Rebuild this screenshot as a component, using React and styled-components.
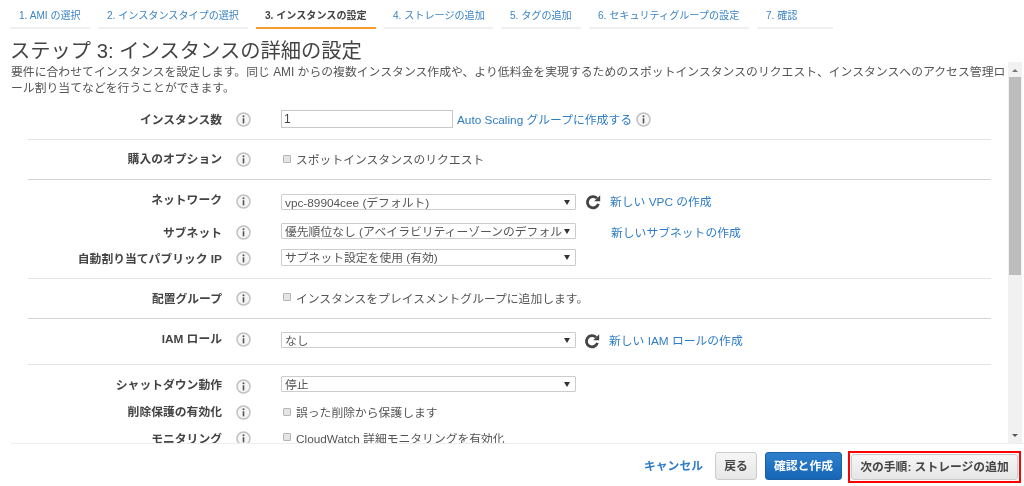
import React from "react";
import styled, { createGlobalStyle } from "styled-components";

const Global = createGlobalStyle`
  html, body { margin: 0; padding: 0; background: #fff; }
  body { font-family: "Liberation Sans", "Noto Sans CJK JP", sans-serif; color: #444; overflow: hidden; }
  * { box-sizing: border-box; }
`;

const Page = styled.div`
  width: 1024px;
  height: 486px;
  display: flex;
  flex-direction: column;
  overflow: hidden;
  filter: blur(0.45px);
`;
const Tabs = styled.nav`
  display: flex;
  gap: 8px;
  padding-left: 10px;
  height: 29px;
  flex: none;
`;
const Tab = styled.div`
  width: ${(p) => p.$w}px;
  height: 29px;
  padding: 8px 0 0 9px;
  font-size: 10.1px;
  line-height: 16px;
  white-space: nowrap;
  color: ${(p) => (p.$active ? "#444" : "#3b84c4")};
  font-weight: ${(p) => (p.$active ? 700 : 400)};
  border-bottom: 2px solid ${(p) => (p.$active ? "#f79a2e" : "#f0f0f0")};
`;
const Title = styled.h1`
  margin: 11px 0 0 10px;
  font-size: 20.3px;
  line-height: 22px;
  height: 22px;
  font-weight: 400;
  color: #444;
  white-space: nowrap;
  flex: none;
`;
const Middle = styled.div`
  height: 381px;
  flex: none;
  display: flex;
`;
const Scroller = styled.div`
  flex: 1;
  min-width: 0;
  overflow: hidden;
  padding-left: 11px;
`;
const Lead = styled.p`
  margin: 2px 0 0;
  width: 996px;
  font-size: 11.85px;
  line-height: 16px;
  color: #555;
  word-break: break-all;
`;
const Form = styled.div`
  margin: 0 17px;
`;
const Section = styled.section`
  padding: ${(p) => p.$top}px 0 ${(p) => p.$bottom}px;
  border-bottom: ${(p) => (p.$last ? "none" : `1px solid ${p.$strong ? "#d4d4d4" : "#e4e4e4"}`)};
`;
const Row = styled.div`
  display: grid;
  grid-template-columns: 194px 42px 1fr;
  align-items: center;
  height: 20px;
  margin-bottom: ${(p) => p.$gap || 0}px;
`;
const Label = styled.label`
  text-align: right;
  font-size: 11.8px;
  font-weight: 700;
  color: #444;
  white-space: nowrap;
  padding-bottom: ${(p) => p.$up || 0}px;
`;
const InfoCell = styled.div`
  display: flex;
  justify-content: center;
  width: 42px;
`;
const Info = styled.svg`
  width: 15px;
  height: 15px;
  flex: none;
  margin-left: ${(p) => p.$ml || 0}px;
`;
const Control = styled.div`
  display: flex;
  align-items: center;
  min-width: 0;
  padding-left: 17px;
`;
const TextInput = styled.input`
  width: 172px;
  height: 18px;
  padding: 0 2px;
  border: 1px solid #c8c8c8;
  font: 12px "Liberation Sans", sans-serif;
  color: #444;
  outline: none;
`;
const Link = styled.a`
  color: #2f7dc6;
  font-size: 11.8px;
  white-space: nowrap;
  margin-left: ${(p) => p.$ml}px;
  padding-bottom: ${(p) => p.$up || 0}px;
`;
const SelectBox = styled.div`
  position: relative;
  width: 295px;
  height: ${(p) => p.$h || 16}px;
  margin-top: ${(p) => (p.$nudge > 0 ? p.$nudge * 2 : 0)}px;
  margin-bottom: ${(p) => (p.$nudge < 0 ? -p.$nudge * 2 : 0)}px;
  border: 1px solid #ccc;
  border-radius: 1px;
  overflow: hidden;
  padding: 0 13px 0 3px;
  font-size: 11.8px;
  line-height: 16px;
  color: #555;
  flex: none;
  background: #fff;
`;
const SelectText = styled.span`
  display: block;
  overflow: hidden;
  white-space: nowrap;
`;
const Arrow = styled.span`
  position: absolute;
  right: 5px;
  top: 5px;
  width: 0;
  height: 0;
  border-left: 3px solid transparent;
  border-right: 3px solid transparent;
  border-top: 5px solid #333;
`;
const Reload = styled.svg`
  width: 16px;
  height: 16px;
  margin: ${(p) => p.$dy}px 0 0 ${(p) => p.$ml}px;
  flex: none;
`;
const CheckLine = styled.div`
  display: flex;
  align-items: center;
  gap: 5px;
  font-size: 11.8px;
  color: #555;
  white-space: nowrap;
  padding: 0 0 2px 2px;
`;
const Box = styled.span`
  width: 8px;
  height: 8px;
  flex: none;
  border: 1px solid #b5b5b5;
  border-radius: 1px;
  background: #e4e4e4;
`;
const Scrollbar = styled.div`
  width: 14px;
  margin-right: 2px;
  flex: none;
  background: #f1f1f1;
  display: flex;
  flex-direction: column;
  align-items: center;
`;
const ScrollArrow = styled.span`
  flex: none;
  width: 0;
  height: 0;
  border-left: 3px solid transparent;
  border-right: 3px solid transparent;
  ${(p) => (p.$up ? "border-bottom: 3px solid #777; margin: 7px 0 5px;" : "border-top: 3px solid #555; margin: auto 0 6px;")}
`;
const Thumb = styled.div`
  width: 12px;
  height: 198px;
  background: #bdbdbd;
`;
const Footer = styled.footer`
  flex: 1;
  margin-left: 11px;
  border-top: 1px solid #eee;
  display: flex;
  align-items: flex-start;
  justify-content: flex-end;
  padding: 8px 3px 0 0;
`;
const Cancel = styled.a`
  color: #2f7dc6;
  font-size: 11.8px;
  font-weight: 700;
  margin: 4px 12px 0 0;
  white-space: nowrap;
`;
const Button = styled.button`
  height: ${(p) => p.$h || 28}px;
  width: ${(p) => p.$w}px;
  padding: 0 0 3px;
  border-radius: 3px;
  font: 700 11.8px "Liberation Sans", "Noto Sans CJK JP", sans-serif;
  white-space: nowrap;
  margin-right: ${(p) => p.$mr || 0}px;
  color: ${(p) => (p.$primary ? "#fff" : "#444")};
  border: 1px solid ${(p) => (p.$primary ? "#1a62a8" : "#ccc")};
  background: ${(p) => (p.$primary ? "linear-gradient(#2d7fcb, #1666b5)" : "linear-gradient(#f6f6f6, #e6e6e6)")};
`;
const Highlight = styled.div`
  border: 2px solid #f00;
  padding: 1px;
  height: 32px;
  margin-top: -1px;
  flex: none;
`;

const tabs = [
  ["1. AMI の選択", 80],
  ["2. インスタンスタイプの選択", 150],
  ["3. インスタンスの設定", 120, true],
  ["4. ストレージの追加", 109],
  ["5. タグの追加", 80],
  ["6. セキュリティグループの設定", 160],
  ["7. 確認", 76],
];

const InfoIcon = ({ ml }) => (
  <Info viewBox="0 0 15 15" $ml={ml}>
    <circle cx="7.5" cy="7.5" r="6.5" fill="#f6f6f6" stroke="#c2c2c2" strokeWidth="1.5" />
    <circle cx="7.5" cy="4.3" r="1" fill="#555" />
    <rect x="6.7" y="6.2" width="1.6" height="5.2" fill="#555" />
  </Info>
);

const ReloadIcon = ({ ml, dy }) => (
  <Reload viewBox="0 0 16 16" $ml={ml} $dy={dy}>
    <path d="M12 4.3A5.6 5.6 0 1 0 13.4 9.8" fill="none" stroke="#444" strokeWidth="2.8" />
    <polygon points="15.2,1.2 15.2,7.2 9.2,7.2" fill="#444" />
  </Reload>
);

const Field = ({ label, up, gap, children }) => (
  <Row $gap={gap}>
    <Label $up={up}>{label}</Label>
    <InfoCell><InfoIcon /></InfoCell>
    <Control>{children}</Control>
  </Row>
);

const Select = ({ children, h, nudge }) => (
  <SelectBox $h={h} $nudge={nudge}>
    <SelectText>{children}</SelectText>
    <Arrow />
  </SelectBox>
);

const Check = ({ children }) => (
  <CheckLine><Box />{children}</CheckLine>
);

export default function App() {
  return (
    <Page>
      <Global />
      <Tabs>
        {tabs.map(([t, w, a]) => (
          <Tab key={t} $w={w} $active={a}>{t}</Tab>
        ))}
      </Tabs>
      <Title>ステップ 3: インスタンスの詳細の設定</Title>
      <Middle>
        <Scroller>
          <Lead>
            要件に合わせてインスタンスを設定します。同じ AMI からの複数インスタンス作成や、より低料金を実現するためのスポットインスタンスのリクエスト、インスタンスへのアクセス管理ロール割り当てなどを行うことができます。
          </Lead>
          <Form>
            <Section $top={13} $bottom={10}>
              <Field label="インスタンス数" up={2}>
                <TextInput defaultValue="1" readOnly />
                <Link $ml={4} $up={2}>Auto Scaling グループに作成する</Link>
                <InfoIcon ml={4} />
              </Field>
            </Section>
            <Section $top={9} $bottom={10} $strong>
              <Field label="購入のオプション" up={4}>
                <Check>スポットインスタンスのリクエスト</Check>
              </Field>
            </Section>
            <Section $top={10} $bottom={10}>
              <Field label="ネットワーク" up={6} gap={12}>
                <Select nudge={0}>vpc-89904cee (デフォルト)</Select>
                <ReloadIcon ml={9} dy={0} />
                <Link $ml={9} $up={2}>新しい VPC の作成</Link>
              </Field>
              <Field label="サブネット" up={2} gap={6}>
                <Select nudge={-1}>優先順位なし (アベイラビリティーゾーンのデフォルト)</Select>
                <Link $ml={35} $up={2}>新しいサブネットの作成</Link>
              </Field>
              <Field label="自動割り当てパブリック IP" up={2}>
                <Select h={17} nudge={-1}>サブネット設定を使用 (有効)</Select>
              </Field>
            </Section>
            <Section $top={9} $bottom={10} $strong>
              <Field label="配置グループ" up={2}>
                <Check>インスタンスをプレイスメントグループに追加します。</Check>
              </Field>
            </Section>
            <Section $top={10} $bottom={5}>
              <Field label="IAM ロール" up={4} gap={10}>
                <Select nudge={0}>なし</Select>
                <ReloadIcon ml={8} dy={2} />
                <Link $ml={9}>新しい IAM ロールの作成</Link>
              </Field>
            </Section>
            <Section $top={10} $bottom={0} $last>
              <Field label="シャットダウン動作" up={6} gap={7}>
                <Select nudge={-3}>停止</Select>
              </Field>
              <Field label="削除保護の有効化" up={4} gap={6}>
                <Check>誤った削除から保護します</Check>
              </Field>
              <Field label="モニタリング" up={2}>
                <Check>CloudWatch 詳細モニタリングを有効化</Check>
              </Field>
            </Section>
          </Form>
        </Scroller>
        <Scrollbar>
          <ScrollArrow $up />
          <Thumb />
          <ScrollArrow />
        </Scrollbar>
      </Middle>
      <Footer>
        <Cancel>キャンセル</Cancel>
        <Button $w={42} $mr={8}>戻る</Button>
        <Button $w={77} $primary $mr={6}>確認と作成</Button>
        <Highlight>
          <Button $w={167} $h={26}>次の手順: ストレージの追加</Button>
        </Highlight>
      </Footer>
    </Page>
  );
}
